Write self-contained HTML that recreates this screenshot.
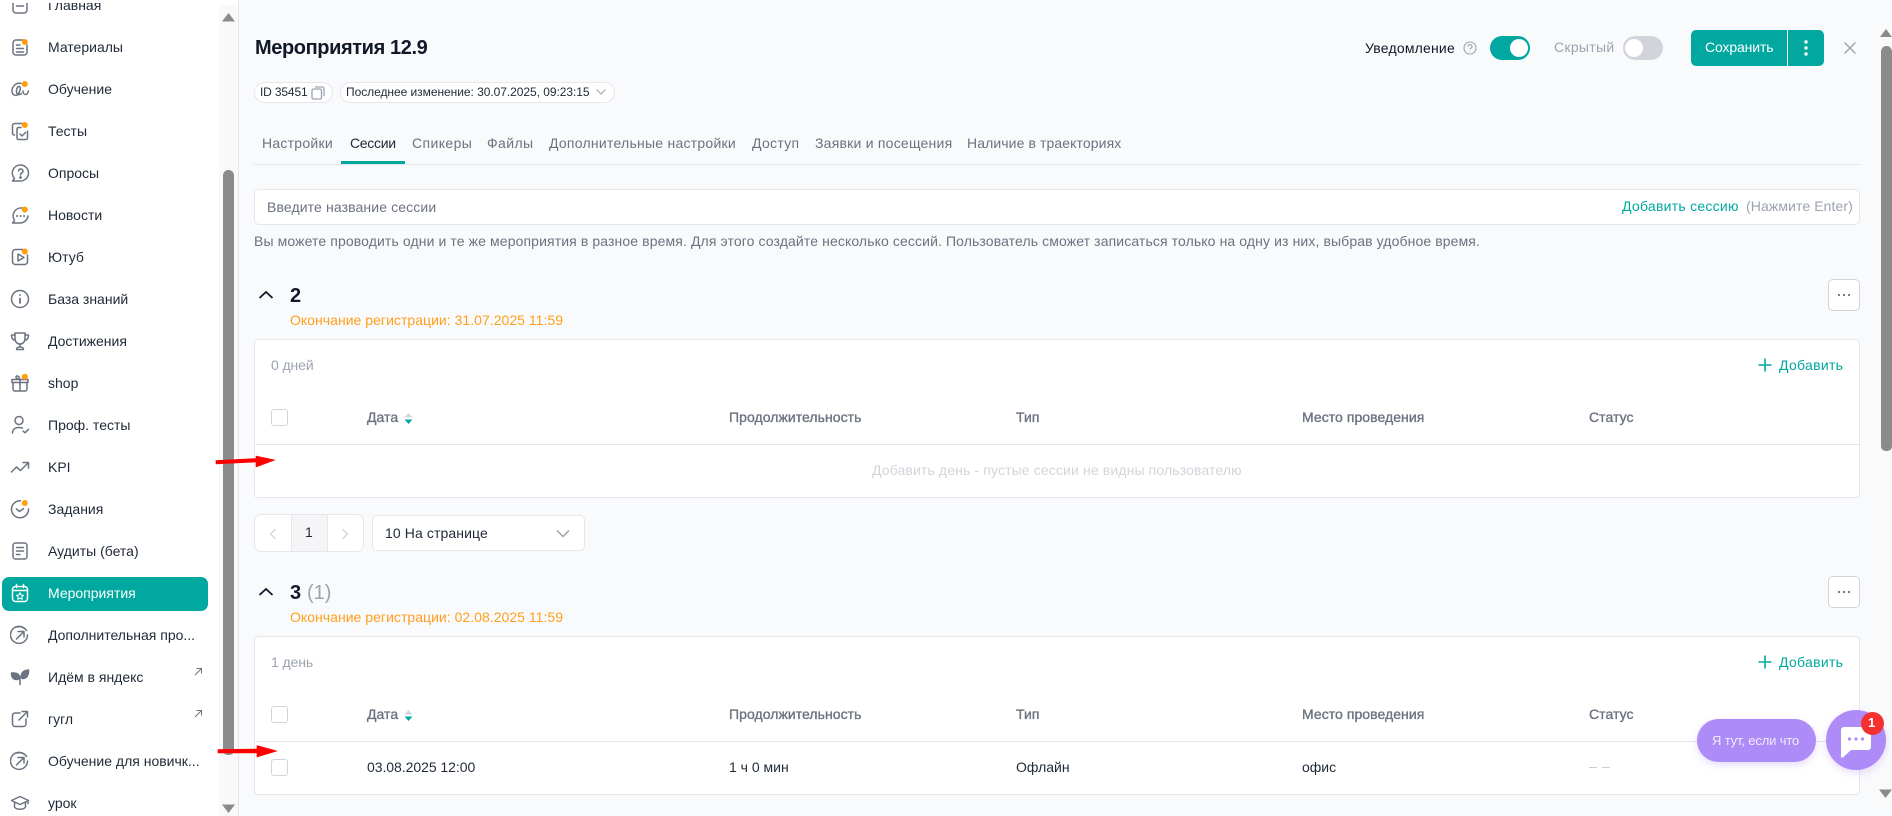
<!DOCTYPE html>
<html lang="ru"><head><meta charset="utf-8"><title>Мероприятия 12.9</title>
<style>
html,body{margin:0;padding:0}
body{position:relative;width:1892px;height:816px;overflow:hidden;background:#fff;font-family:"Liberation Sans","Noto Sans CJK SC",sans-serif;font-size:14px;color:#111827}
.a{position:absolute}
.t{position:absolute;white-space:nowrap;transform:translateY(-50%);line-height:18px}
.m{left:48px;color:#1f2937;letter-spacing:0}
.i{position:absolute;left:10px;width:20px;height:20px;fill:none;stroke:#6b7280;stroke-width:1.5;stroke-linecap:round;stroke-linejoin:round}
.g{color:#6b7280}
.th{color:#6b7280;font-weight:400;-webkit-text-stroke:.35px #6b7280;letter-spacing:.05px}
.o{color:#ff9f1c;letter-spacing:.03px}
.teal{color:#00a8a0}
.card{position:absolute;left:254px;width:1604px;background:#fff;border:1px solid #e5e7eb;border-radius:4px}
.cb{position:absolute;left:271px;width:15px;height:15px;border:1px solid #d1d5db;border-radius:3px;background:#fff}
.hl{position:absolute;left:255px;width:1604px;height:1px;background:#e5e7eb}
.more{position:absolute;left:1828px;width:30px;height:30px;border:1px solid #d1d5db;border-radius:5px;background:#fff}
.more b{position:absolute;top:14px;width:2.4px;height:2.4px;border-radius:50%;background:#4b5563}
</style></head><body>

<!-- sidebar -->
<div class="a" style="left:219px;top:5px;width:19px;height:811px;background:#f9f9f9"></div>
<div class="a" style="left:223px;top:170px;width:11px;height:585px;background:#8b8b8b;border-radius:6px 6px 5px 5px"></div>
<svg class="a" style="left:222px;top:12px" width="13" height="10"><path d="M6.500 1L13 9.500H0z" fill="#8b8b8b"/></svg>
<svg class="a" style="left:222px;top:804px" width="13" height="10"><path d="M0 .5H13L6.500 9z" fill="#8b8b8b"/></svg>

<div class="a" style="left:2px;top:577px;width:206px;height:34px;background:#00a8a0;border-radius:7px"></div>

<div class="t m" style="top:5px">Главная</div>
<div class="t m" style="top:47px">Материалы</div>
<div class="t m" style="top:89px">Обучение</div>
<div class="t m" style="top:131px">Тесты</div>
<div class="t m" style="top:173px">Опросы</div>
<div class="t m" style="top:215px">Новости</div>
<div class="t m" style="top:257px">Ютуб</div>
<div class="t m" style="top:299px">База знаний</div>
<div class="t m" style="top:341px">Достижения</div>
<div class="t m" style="top:383px">shop</div>
<div class="t m" style="top:425px">Проф. тесты</div>
<div class="t m" style="top:467px">KPI</div>
<div class="t m" style="top:509px">Задания</div>
<div class="t m" style="top:551px">Аудиты (бета)</div>
<div class="t m" style="top:593px;color:#fff">Мероприятия</div>
<div class="t m" style="top:635px">Дополнительная про...</div>
<div class="t m" style="top:677px">Идём в яндекс</div>
<div class="t m" style="top:719px">гугл</div>
<div class="t m" style="top:761px">Обучение для новичк...</div>
<div class="t m" style="top:803px">урок</div>

<svg class="i" style="top:-5px" viewBox="0 0 20 20"><rect x="3" y="2" width="14" height="16" rx="3"/><path d="M6.500 7h7M6.500 11h7"/></svg>
<svg class="i" style="top:37px" viewBox="0 0 20 20"><path d="M13 3H6a3 3 0 0 0-3 3v9a3 3 0 0 0 3 3h8a3 3 0 0 0 3-3V8M6.500 8H10M6.500 11.500h7M6.500 15h7"/><circle cx="14.800" cy="5" r="3" fill="#ff9f0a" stroke="none"/></svg>
<svg class="i" style="top:79px" viewBox="0 0 20 20"><path d="M11 4.500C7 3 2 7 2 12c0 4 4 5.500 6 3.500 2-2.500 3-7 1.500-8-2-1-4 4-2.500 7 1 1.500 3 1.500 4.500 0M13 12c0 2 1 3.500 2.500 3.500S18 14 18.500 12"/><circle cx="14.800" cy="5" r="3" fill="#ff9f0a" stroke="none"/></svg>
<svg class="i" style="top:121px" viewBox="0 0 20 20"><path d="M13 2.500H4.500a2 2 0 0 0-2 2V12a2 2 0 0 0 2 2"/><path d="M7 8a1.500 1.500 0 0 1 1.500-1.500H11M17.500 10v7a1.500 1.500 0 0 1-1.500 1.500H8.500A1.500 1.500 0 0 1 7 17V8M10 13l2 2 3.500-3.500"/><circle cx="14.800" cy="4" r="3" fill="#ff9f0a" stroke="none"/></svg>
<svg class="i" style="top:163px" viewBox="0 0 20 20"><path d="M10.500 2a8 8 0 0 1 0 16H2.500l2-2.500A8 8 0 0 1 10.500 2z"/><path d="M8.500 8a2.200 2.200 0 1 1 3 2.200c-.8.400-1 1-1 1.800"/><circle cx="10.500" cy="14.500" r=".6" fill="#6b7280"/></svg>
<svg class="i" style="top:205px" viewBox="0 0 20 20"><path d="M12 3a8 8 0 0 0-7.500 12.500L2.500 18H10.500a8 8 0 0 0 7.500-7"/><path d="M7 11h.1M10.500 11h.1M14 11h.1" stroke-width="2"/><circle cx="14.800" cy="4.500" r="3" fill="#ff9f0a" stroke="none"/></svg>
<svg class="i" style="top:247px" viewBox="0 0 20 20"><path d="M12.500 2.500H5.500a3 3 0 0 0-3 3v9a3 3 0 0 0 3 3h9a3 3 0 0 0 3-3V8"/><path d="M8 7l6 3.500-6 3.500z"/><circle cx="14.800" cy="4.500" r="3" fill="#ff9f0a" stroke="none"/></svg>
<svg class="i" style="top:289px" viewBox="0 0 20 20"><circle cx="10" cy="10" r="8.500"/><path d="M10 9.500v4.500M10 6h.1" stroke-width="1.800"/></svg>
<svg class="i" style="top:331px" viewBox="0 0 20 20"><path d="M5 2h10v6a5 5 0 0 1-10 0zM5 4H1.500c0 3 1 5 4 5.500M15 4h3.500c0 3-1 5-4 5.500M10 13v3M6.500 18.500c0-2 1-2.500 3.500-2.500s3.500.5 3.500 2.500z"/></svg>
<svg class="i" style="top:373px" viewBox="0 0 20 20"><path d="M3 9.500V16a2 2 0 0 0 2 2h10a2 2 0 0 0 2-2V9.500M2 6.500h16v3H2zM10 6.500V18M10 6.500C8 6.500 6 5.500 6 4s2.500-2 4 2.500"/><circle cx="14.800" cy="3.800" r="3" fill="#ff9f0a" stroke="none"/></svg>
<svg class="i" style="top:415px" viewBox="0 0 20 20"><circle cx="9" cy="5.500" r="4"/><path d="M2.500 18c0-3.500 2.500-5.500 6.500-5.500 1.500 0 2.500.2 3.500.7M13 16l2 1.800 3.500-3.500"/></svg>
<svg class="i" style="top:457px" viewBox="0 0 20 20"><path d="M1.500 15l5-5 4 3.500 7.500-7.500M13 5.500h5.500V11"/></svg>
<svg class="i" style="top:499px" viewBox="0 0 20 20"><path d="M10.500 1.800A8.500 8.500 0 1 0 18.500 10M6.500 10l3 2.500 4-3"/><circle cx="14.800" cy="4" r="3" fill="#ff9f0a" stroke="none"/></svg>
<svg class="i" style="top:541px" viewBox="0 0 20 20"><rect x="3" y="2" width="14" height="16" rx="2.500"/><path d="M6.500 6.500h7M6.500 10h7M6.500 13.500H10"/></svg>
<svg class="i" style="top:583px;stroke:#fff" viewBox="0 0 20 20"><rect x="2.500" y="3.500" width="15" height="15" rx="3"/><path d="M2.500 7.500h15M6.500 1.500v3M13.500 1.500v3"/><path d="M10 9.800l1.200 2.200 2.300.3-1.700 1.600.4 2.300-2.200-1.100-2.200 1.100.4-2.300-1.700-1.600 2.300-.3z" stroke-width="1.100"/></svg>
<svg class="i" style="top:625px" viewBox="0 0 20 20"><path d="M14 3a8.500 8.500 0 1 0 3.500 7"/><path d="M16.500 5.500A8.500 8.500 0 0 0 7 2M6.500 14L14 6.500M8 6.500h6V12"/></svg>
<svg class="i" style="top:667px;fill:#6b7280" viewBox="0 0 20 20"><path d="M9.500 10C9 6.500 6 6 1.500 6c0 3.500 1.500 6 4.500 6.500 1.500.2 3-.6 3.500-2.500zM11 10c.5-5 3-6.500 7.500-7 .2 4.500-1.500 8-5 8.500-1 .1-2-.4-2.500-1.500zM10 10v7.500"/></svg>
<svg class="i" style="top:709px" viewBox="0 0 20 20"><path d="M10 4H5a2.500 2.500 0 0 0-2.500 2.500V15A2.500 2.500 0 0 0 5 17.500h8.500A2.500 2.500 0 0 0 16 15v-5M9 11L17.500 2.500M12 2.500h5.500V8"/></svg>
<svg class="i" style="top:751px" viewBox="0 0 20 20"><path d="M14 3a8.500 8.500 0 1 0 3.500 7"/><path d="M16.500 5.500A8.500 8.500 0 0 0 7 2M6.500 14L14 6.500M8 6.500h6V12"/></svg>
<svg class="i" style="top:793px" viewBox="0 0 20 20"><path d="M10 3.500L18.500 7.500 10 11.500 1.500 7.500zM4.500 9.500V14c2 3 9 3 11 0V9.500M18 7.500v3"/></svg>
<svg class="a" style="left:193px;top:667px" width="10" height="10" fill="none" stroke="#6b7280" stroke-width="1"><path d="M2 8L8.500 1.500M3.500 1.500h5v5"/></svg>
<svg class="a" style="left:193px;top:709px" width="10" height="10" fill="none" stroke="#6b7280" stroke-width="1"><path d="M2 8L8.500 1.500M3.500 1.500h5v5"/></svg>
<div class="a" style="left:0;top:0;width:219px;height:3px;background:#fff"></div>

<!-- main -->
<div class="a" style="left:238px;top:0;width:1654px;height:816px;background:#f9fafc;border-left:1px solid #e5e7eb;box-sizing:border-box"></div>
<div class="a" style="left:1880px;top:28px;width:12px;height:775px;background:#fafafa"></div>
<div class="a" style="left:1881px;top:46px;width:11px;height:405px;background:#8b8b8b;border-radius:6px 6px 5px 5px"></div>
<svg class="a" style="left:1880px;top:28px" width="12" height="10"><path d="M6 1L12 9H0z" fill="#8b8b8b"/></svg>
<svg class="a" style="left:1879px;top:789px" width="13" height="10"><path d="M0 .5H13L6.500 9z" fill="#8b8b8b"/></svg>

<div class="t" style="left:255px;top:48px;font-size:20px;font-weight:700;line-height:24px;color:#111827;letter-spacing:-.4px">Мероприятия 12.9</div>

<div class="a" style="left:254px;top:82px;width:77px;height:19px;border:1px solid #e5e7eb;border-radius:11px;background:#fff"></div>
<div class="t" style="left:260px;top:92px;font-size:12px;color:#1f2937;letter-spacing:-.15px">ID 35451</div>
<svg class="a" style="left:311px;top:86px" width="15" height="14" fill="none" stroke="#9ca3af" stroke-width="1.300"><rect x="1" y="3" width="9.500" height="10" rx="1.500"/><path d="M4 1h7.500A1.500 1.500 0 0 1 13 2.500V10"/></svg>
<div class="a" style="left:340px;top:82px;width:273px;height:19px;border:1px solid #e5e7eb;border-radius:11px;background:#fff"></div>
<div class="t" style="left:346px;top:92px;font-size:12px;color:#1f2937;letter-spacing:-.05px">Последнее изменение: 30.07.2025, 09:23:15</div>
<svg class="a" style="left:595px;top:88px" width="12" height="8" fill="none" stroke="#9ca3af" stroke-width="1.100"><path d="M1.500 1.500L6 6l4.500-4.500"/></svg>

<div class="t" style="left:1365px;top:48px;color:#111827;letter-spacing:.2px">Уведомление</div>
<svg class="a" style="left:1463px;top:41px" width="14" height="14" fill="none" stroke="#9ca3af" stroke-width="1.100"><circle cx="7" cy="7" r="6"/><path d="M5.200 5.500a1.900 1.900 0 1 1 2.600 1.800c-.6.300-.8.600-.8 1.200M7 10.300v.3"/></svg>
<div class="a" style="left:1490px;top:36px;width:40px;height:24px;border-radius:12px;background:#00a8a0"></div>
<div class="a" style="left:1510px;top:39px;width:18px;height:18px;border-radius:50%;background:#fff"></div>
<div class="t" style="left:1554px;top:47px;color:#9ca3af;letter-spacing:.3px">Скрытый</div>
<div class="a" style="left:1623px;top:36px;width:40px;height:24px;border-radius:12px;background:#d1d5db"></div>
<div class="a" style="left:1625px;top:39px;width:18px;height:18px;border-radius:50%;background:#fff"></div>
<div class="a" style="left:1691px;top:30px;width:133px;height:36px;border-radius:5px;background:#00a8a0"></div>
<div class="a" style="left:1787px;top:30px;width:1px;height:36px;background:#fff"></div>
<div class="t" style="left:1705px;top:47px;color:#fff;letter-spacing:-.13px">Сохранить</div>
<svg class="a" style="left:1803px;top:39px" width="6" height="18" fill="#fff"><circle cx="3" cy="3" r="1.700"/><circle cx="3" cy="9" r="1.700"/><circle cx="3" cy="15" r="1.700"/></svg>
<svg class="a" style="left:1843px;top:41px" width="14" height="14" fill="none" stroke="#9ca3af" stroke-width="1.400"><path d="M1.500 1.500l11 11M12.500 1.500l-11 11"/></svg>

<!-- tabs -->
<div class="t g" style="left:262px;top:143px;letter-spacing:.25px">Настройки</div>
<div class="t" style="left:350px;top:143px;color:#1f2937;letter-spacing:-.3px">Сессии</div>
<div class="t g" style="left:412px;top:143px;letter-spacing:.4px">Спикеры</div>
<div class="t g" style="left:487px;top:143px;letter-spacing:.4px">Файлы</div>
<div class="t g" style="left:549px;top:143px;letter-spacing:.25px">Дополнительные настройки</div>
<div class="t g" style="left:752px;top:143px;letter-spacing:.3px">Доступ</div>
<div class="t g" style="left:815px;top:143px;letter-spacing:.23px">Заявки и посещения</div>
<div class="t g" style="left:967px;top:143px;letter-spacing:.1px">Наличие в траекториях</div>
<div class="a" style="left:254px;top:164px;width:1606px;height:1px;background:#e5e7eb"></div>
<div class="a" style="left:341px;top:161px;width:64px;height:3px;background:#00a8a0"></div>

<!-- input -->
<div class="a" style="left:254px;top:189px;width:1604px;height:34px;border:1px solid #e5e7eb;border-radius:5px;background:#fff"></div>
<div class="t g" style="left:267px;top:207px;letter-spacing:.12px">Введите название сессии</div>
<div class="t teal" style="left:1622px;top:206px;letter-spacing:.26px">Добавить сессию</div>
<div class="t" style="left:1746px;top:206px;color:#9ca3af;letter-spacing:.1px">(Нажмите Enter)</div>
<div class="t g" style="left:254px;top:241px;letter-spacing:.11px">Вы можете проводить одни и те же мероприятия в разное время. Для этого создайте несколько сессий. Пользователь сможет записаться только на одну из них, выбрав удобное время.</div>

<!-- section 2 -->
<svg class="a" style="left:258px;top:290px" width="16" height="10" fill="none" stroke="#111827" stroke-width="1.800"><path d="M1.500 8L8 2l6.500 6"/></svg>
<div class="t" style="left:290px;top:296px;font-size:20px;font-weight:700;line-height:24px">2</div>
<div class="t o" style="left:290px;top:320px">Окончание регистрации: 31.07.2025 11:59</div>
<div class="more" style="top:279px"><b style="left:9px"></b><b style="left:14px"></b><b style="left:19px"></b></div>
<div class="card" style="top:339px;height:157px"></div>
<div class="t" style="left:271px;top:365px;color:#9ca3af;letter-spacing:-.1px">0 дней</div>
<svg class="a" style="left:1758px;top:358px" width="14" height="14" fill="none" stroke="#00a8a0" stroke-width="1.600"><path d="M7 .5v13M.5 7h13"/></svg>
<div class="t teal" style="left:1779px;top:365px;letter-spacing:.3px">Добавить</div>
<div class="cb" style="top:409px"></div>
<div class="t th" style="left:367px;top:417px">Дата</div>
<svg class="a" style="left:404px;top:413px" width="9" height="11"><path d="M4.500 0L8.500 4.500H.5z" fill="#d1d5db"/><path d="M.5 6.500H8.500L4.500 11z" fill="#00a8a0"/></svg>
<div class="t th" style="left:729px;top:417px">Продолжительность</div>
<div class="t th" style="left:1016px;top:417px">Тип</div>
<div class="t th" style="left:1302px;top:417px">Место проведения</div>
<div class="t th" style="left:1589px;top:417px">Статус</div>
<div class="hl" style="top:444px"></div>
<div class="t" style="left:872px;top:470px;color:#d1d5db;letter-spacing:.13px">Добавить день - пустые сессии не видны пользователю</div>

<!-- pagination -->
<div class="a" style="left:254px;top:514px;width:108px;height:36px;border:1px solid #e5e7eb;border-radius:7px;background:#fff"></div>
<div class="a" style="left:291px;top:515px;width:35px;height:36px;background:#f5f5f7;border-left:1px solid #e5e7eb;border-right:1px solid #e5e7eb"></div>
<div class="t" style="left:305px;top:532px;color:#1f2937">1</div>
<svg class="a" style="left:269px;top:528px" width="8" height="12" fill="none" stroke="#d1d5db" stroke-width="1.300"><path d="M6.500 1L1.500 6l5 5"/></svg>
<svg class="a" style="left:341px;top:528px" width="8" height="12" fill="none" stroke="#d1d5db" stroke-width="1.300"><path d="M1.500 1l5 5-5 5"/></svg>
<div class="a" style="left:372px;top:515px;width:211px;height:34px;border:1px solid #e5e7eb;border-radius:5px;background:#fff"></div>
<div class="t" style="left:385px;top:533px;color:#1f2937;letter-spacing:.1px">10 На странице</div>
<svg class="a" style="left:556px;top:529px" width="14" height="9" fill="none" stroke="#9ca3af" stroke-width="1.500"><path d="M1 1.500l6 6 6-6"/></svg>

<!-- section 3 -->
<svg class="a" style="left:258px;top:587px" width="16" height="10" fill="none" stroke="#111827" stroke-width="1.800"><path d="M1.500 8L8 2l6.500 6"/></svg>
<div class="t" style="left:290px;top:593px;font-size:20px;font-weight:700;line-height:24px">3</div>
<div class="t" style="left:307px;top:593px;font-size:20px;line-height:24px;color:#9ca3af">(1)</div>
<div class="t o" style="left:290px;top:617px">Окончание регистрации: 02.08.2025 11:59</div>
<div class="more" style="top:576px"><b style="left:9px"></b><b style="left:14px"></b><b style="left:19px"></b></div>
<div class="card" style="top:636px;height:157px"></div>
<div class="t" style="left:271px;top:662px;color:#9ca3af;letter-spacing:-.1px">1 день</div>
<svg class="a" style="left:1758px;top:655px" width="14" height="14" fill="none" stroke="#00a8a0" stroke-width="1.600"><path d="M7 .5v13M.5 7h13"/></svg>
<div class="t teal" style="left:1779px;top:662px;letter-spacing:.3px">Добавить</div>
<div class="cb" style="top:706px"></div>
<div class="t th" style="left:367px;top:714px">Дата</div>
<svg class="a" style="left:404px;top:710px" width="9" height="11"><path d="M4.500 0L8.500 4.500H.5z" fill="#d1d5db"/><path d="M.5 6.500H8.500L4.500 11z" fill="#00a8a0"/></svg>
<div class="t th" style="left:729px;top:714px">Продолжительность</div>
<div class="t th" style="left:1016px;top:714px">Тип</div>
<div class="t th" style="left:1302px;top:714px">Место проведения</div>
<div class="t th" style="left:1589px;top:714px">Статус</div>
<div class="hl" style="top:741px"></div>
<div class="cb" style="top:759px"></div>
<div class="t" style="left:367px;top:767px;color:#1f2937;letter-spacing:-.05px">03.08.2025 12:00</div>
<div class="t" style="left:729px;top:767px;color:#1f2937;letter-spacing:0">1 ч 0 мин</div>
<div class="t" style="left:1016px;top:767px;color:#1f2937;letter-spacing:0">Офлайн</div>
<div class="t" style="left:1302px;top:767px;color:#1f2937">офис</div>
<div class="a" style="left:1589px;top:767px;width:8px;height:1px;background:#c9cdd3"></div>
<div class="a" style="left:1602px;top:767px;width:8px;height:1px;background:#c9cdd3"></div>

<!-- chat -->
<div class="a" style="left:1697px;top:719px;width:119px;height:43px;border-radius:22px;background:#ad8cf7;box-shadow:0 3px 8px rgba(173,140,247,.3)"></div>
<div class="t" style="left:1712px;top:741px;color:#f0ebfe;font-size:13px;letter-spacing:-.15px">Я тут, если что</div>
<div class="a" style="left:1826px;top:710px;width:60px;height:60px;border-radius:50%;background:#ad8cf7;box-shadow:0 3px 8px rgba(173,140,247,.3)"></div>
<svg class="a" style="left:1840px;top:726px" width="32" height="32"><path d="M4 1h24a3 3 0 0 1 3 3v17a3 3 0 0 1-3 3H11l-7 6.500a1.500 1.500 0 0 1-3-1V4a3 3 0 0 1 3-3z" fill="#fff"/><g fill="#ad8cf7"><circle cx="9.500" cy="13" r="1.600"/><circle cx="16" cy="13" r="1.600"/><circle cx="22.500" cy="13" r="1.600"/></g></svg>
<div class="a" style="left:1861px;top:712px;width:23px;height:23px;border-radius:50%;background:#f4312e"></div>
<div class="t" style="left:1868px;top:723px;color:#fff;font-weight:700;font-size:13px">1</div>

<!-- red arrows -->
<svg class="a" style="left:210px;top:450px" width="72" height="20"><path d="M6 10.500L46 8.500V6L65 10 46 17V12L6 14z" fill="#ff0000" stroke="#ff0000" stroke-width=".6" stroke-linejoin="round"/></svg>
<svg class="a" style="left:210px;top:740px" width="72" height="20"><path d="M8 9.500L47 9V5.500L67 11 47 17V13L8 13z" fill="#ff0000" stroke="#ff0000" stroke-width=".6" stroke-linejoin="round"/></svg>
</body></html>
